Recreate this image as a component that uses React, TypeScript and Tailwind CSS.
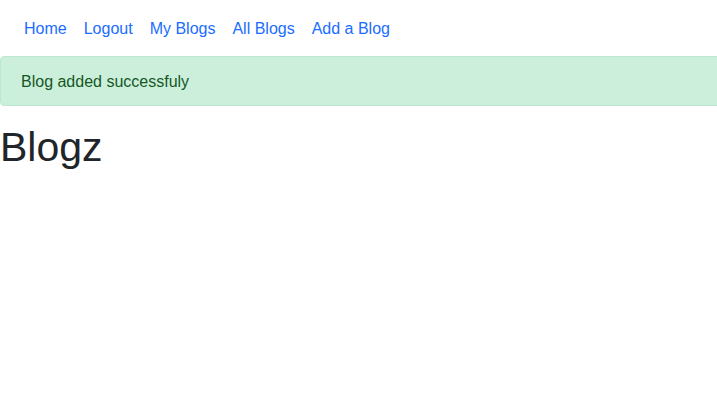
const links = ['Home', 'Logout', 'My Blogs', 'All Blogs', 'Add a Blog'];

export default function App() {
  return (
    <div className="min-h-[400px] overflow-hidden bg-white font-['Liberation_Sans',Arial,sans-serif] text-base leading-6 text-[#212529]">
      <nav className="flex px-4 pb-[7px] pt-[9px]">
        <ul className="flex gap-[1px]">
          {links.map((l) => (
            <li key={l}>
              <a href="#" className="block px-2 py-2 text-[#1a6dff]">
                {l}
              </a>
            </li>
          ))}
        </ul>
      </nav>
      <div className="mb-4 mr-[-4px] rounded border border-[#bde8cf] bg-[#ccefdc] px-5 pb-[11px] pt-[13px] text-[#155724]">
        Blog added successfuly
      </div>
      <h1 className="mb-2 pt-[1px] text-[41px] font-medium leading-[1.2]">Blogz</h1>
    </div>
  );
}
